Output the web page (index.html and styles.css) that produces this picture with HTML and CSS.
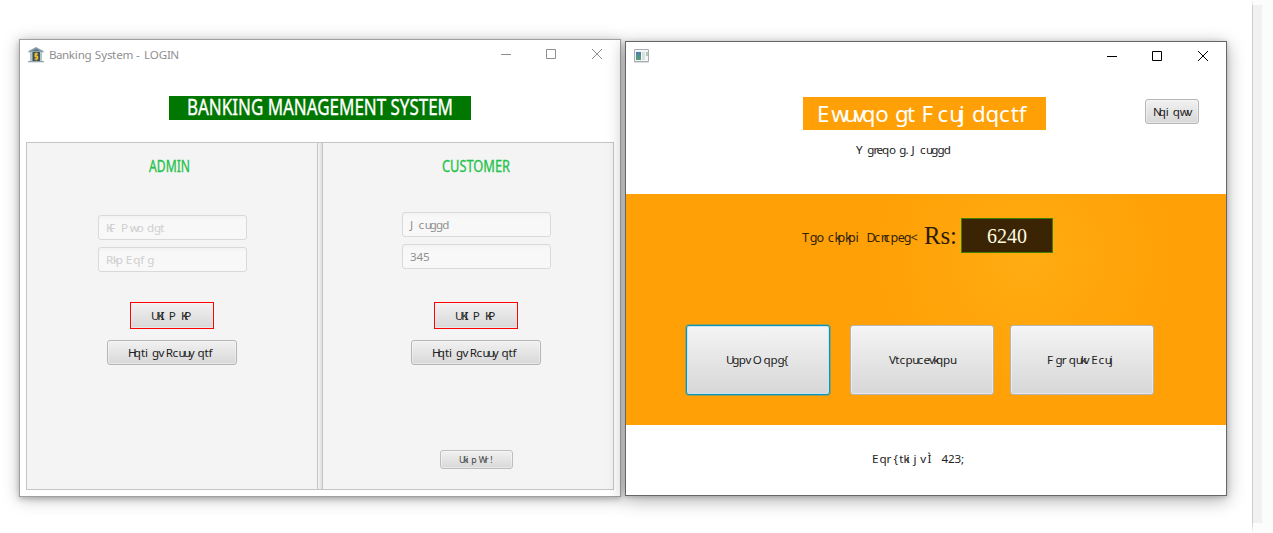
FILE: index.html
```html
<!DOCTYPE html>
<html lang="en">
<head>
<meta charset="utf-8">
<title>Banking System</title>
<link rel="stylesheet" href="styles.css">
</head>
<body>
<div class="page">
  <div class="stage">
    <section class="window login">
      <header class="titlebar">
        <svg class="app-icon" width="16" height="16" viewBox="0 0 16 16">
          <path d="M8 0 15.5 4v1.6H.5V4z" fill="#8ba0ab"/><path d="M4 4h8L8 1.8z" fill="#5d7480"/>
          <path d="M2 5.6h12v8.4H2z" fill="#b4c3ca"/><path d="M4.5 5h7.5v9H4.5z" fill="#3d4f58"/>
          <path d="M0 14h16v1.3H0z" fill="#93a5ae"/>
          <path d="M10 6.9H7.1v2.5h2.5v2.6H6.3M8.2 5.5v8" fill="none" stroke="#eec02c" stroke-width="1.2"/>
        </svg>
        <svg class="t title" data-metrics="Banking System - LOGIN"><text>Banking System - LOGIN</text></svg>
        <svg class="controls" width="104" height="12" viewBox="0 0 104 12"><path d="M0 5.5h10M45.5 .5h9v9h-9zM91 0l10 10M101 0L91 10"/></svg>
      </header>
      <div class="banner green"><svg width="266" height="24"><text x="0" y="19" textLength="266" lengthAdjust="spacingAndGlyphs">BANKING MANAGEMENT SYSTEM</text></svg></div>
      <div class="split">
        <div class="pane admin">
          <div class="head"><svg width="41" height="18"><text x="0" y="15" textLength="41" lengthAdjust="spacingAndGlyphs">ADMIN</text></svg></div>
          <div class="form">
            <div class="field hint"><svg class="t" data-metrics="ID Number"><text>KF P wo dgt</text></svg></div>
            <div class="field hint"><svg class="t" data-metrics="Pin Code"><text>Rkp Eqf g</text></svg></div>
            <div class="btn signin"><svg class="t" data-metrics="SIGN IN"><text>UKI P KP</text></svg></div>
            <div class="btn forgot"><svg class="t" data-metrics="Forget Password"><text>Hqti gv Rcuuy qtf</text></svg></div>
          </div>
        </div>
        <div class="divider"></div>
        <div class="pane customer">
          <div class="head"><svg width="68" height="18"><text x="0" y="15" textLength="68" lengthAdjust="spacingAndGlyphs">CUSTOMER</text></svg></div>
          <div class="form">
            <div class="field"><svg class="t" data-metrics="Haseeb"><text>J cuggd</text></svg></div>
            <div class="field"><svg class="t" data-metrics="123"><text>345</text></svg></div>
            <div class="btn signin"><svg class="t" data-metrics="SIGN IN"><text>UKI P KP</text></svg></div>
            <div class="btn forgot"><svg class="t" data-metrics="Forget Password"><text>Hqti gv Rcuuy qtf</text></svg></div>
            <div class="btn signup"><svg class="t" data-size="9" data-metrics="Sign Up!"><text>Uki p Wr !</text></svg></div>
          </div>
        </div>
      </div>
    </section>

    <section class="window dash">
      <header class="titlebar">
        <svg class="app-icon" width="16" height="14" viewBox="0 0 16 14">
          <path d="M.5.5h14v12H.5z" fill="#f3f5f6" stroke="#a7adb5"/><path d="M0 13.5h15" stroke="#ddd"/>
          <defs><linearGradient id="sky" x2="0" y2="1"><stop stop-color="#4a7cae"/><stop offset="1" stop-color="#55a573"/></linearGradient></defs>
          <path d="M2 3h5v8H2z" fill="url(#sky)"/><path d="M8 3h3v8H8z" fill="#dcdfe0"/><path d="M12 3h2v4h-2z" fill="#a5cfb8"/>
        </svg>
        <svg class="controls" width="104" height="12" viewBox="0 0 104 12"><path d="M0 5.5h10M45.5 .5h9v9h-9zM91 0l10 10M101 0L91 10"/></svg>
      </header>
      <div class="top">
        <div class="greeting">
          <div class="banner orange"><svg class="t" data-size="23" data-metrics="Customer Dashboard"><text>E wuvqo gt F cuj dqctf</text></svg></div>
          <svg class="t welcome" data-metrics="Welcome, Haseeb"><text>Y greqo g. J cuggd</text></svg>
        </div>
        <div class="btn logout"><svg class="t" data-metrics="Logout"><text>Nqi qwv</text></svg></div>
      </div>
      <div class="band">
        <div class="balance">
          <svg class="t" data-size="13" data-metrics="Remaining Balance:"><text>Tgo ckpkpi Dcncpeg&lt;</text></svg>
          <svg class="rs" width="33" height="30"><text x="0" y="23" textLength="33" lengthAdjust="spacingAndGlyphs">Rs:</text></svg>
          <div class="amount"><svg width="40" height="33"><text x="0" y="24" textLength="40" lengthAdjust="spacingAndGlyphs">6240</text></svg></div>
        </div>
        <div class="actions">
          <div class="btn big focused"><svg class="t" data-metrics="Sent Money"><text>Ugpv O qpg{</text></svg></div>
          <div class="btn big"><svg class="t" data-metrics="Transactions"><text>Vtcpucevkqpu</text></svg></div>
          <div class="btn big"><svg class="t" data-metrics="Deposit Cash"><text>F gr qukv E cuj</text></svg></div>
        </div>
      </div>
      <footer><svg class="t" data-metrics="Copyright © 2019"><text>Eqr {tki j v Ì 423;</text></svg></footer>
    </section>
  </div>
  <div class="edge"></div>
</div>
<script src="labels.js"></script>
</body>
</html>
```
FILE: styles.css
```css
* { box-sizing: border-box; }
body { margin: 0; background: #fff; font-family: "Noto Sans", "Open Sans", sans-serif; overflow: hidden; }
svg { display: block; flex: none; overflow: visible; }
text { white-space: pre; }
.page { display: flex; width: 1273px; height: 533px; }
.stage { display: flex; align-items: flex-start; gap: 4px; width: 1252px; padding: 39px 0 0 19px; }
.edge {
  width: 21px;
  background:
    linear-gradient(transparent, #ccc 8px, #ccc 522px, transparent) 0 0 / 1px 533px no-repeat,
    linear-gradient(#f1f1f1, #f1f1f1) 1px 5px / 9px 518px no-repeat #fcfcfc;
}

.window { display: flex; flex-direction: column; flex: none; width: 602px; background: #fff; }
.login { height: 458px; border: 1px solid #a0a0a0; box-shadow: 0 2px 15px rgba(0,0,0,.28), 0 2px 5px rgba(0,0,0,.2); }
.dash { height: 455px; margin-top: 2px; border: 1px solid #666; box-shadow: 0 4px 17px rgba(0,0,0,.33), 0 1px 5px rgba(0,0,0,.2); }
.titlebar { display: flex; align-items: flex-start; height: 30px; flex: none; padding: 7px 15px 0 8px; }
.titlebar .title { margin: 0 0 0 5px; fill: #8f8f8f; }
.controls { margin: 2px 0 0 auto; fill: none; stroke: #8f8f8f; }
.dash .controls { stroke: #000; }

.t { fill: #222; }
.banner { display: flex; justify-content: center; align-items: center; }
.green { width: 302px; height: 24px; margin: 26px 0 0 149px; background: #070; fill: #fff; stroke: #fff; stroke-width: .35px; font-size: 21px; }
.split { display: flex; height: 348px; margin: 22px 6px 0; border: 1px solid #c4c4c4; background: #f4f4f4; }
.pane { width: 290px; }
.divider { width: 6px; border: solid #c4c4c4; border-width: 0 1px; background: linear-gradient(90deg, #f4f4f4, #dedede); }
.head { display: flex; height: 20px; margin-top: 14px; fill: #1fc24a; stroke: #1fc24a; stroke-width: .3px; font-size: 15.5px; }
.admin .head { padding-left: 122px; }
.customer .head { padding-left: 119px; }
.form { display: flex; flex-direction: column; align-items: center; width: 148px; }
.admin .form { margin: 38px 0 0 71px; }
.customer .form { margin: 35px 0 0 79px; }
.field { display: flex; align-items: center; align-self: flex-start; flex: none; width: 149px; height: 25px; margin-bottom: 7px; padding-left: 7px; background: linear-gradient(#f3f3f3, #f8f8f8 5px); border: 1px solid #d9d9d9; border-radius: 3px; }
.field .t { fill: #919191; }
.hint .t { fill: #cfcfcf; }

.btn { display: flex; align-items: center; justify-content: center; flex: none; border: 1px solid #b5b5b5; border-radius: 3px; background: linear-gradient(#f1f1f1, #d8d8d8); box-shadow: inset 0 0 0 1px rgba(255,255,255,.4); }
.signin { width: 84px; height: 27px; margin-top: 23px; border-color: #f00; border-radius: 0; }
.customer .signin { margin-top: 26px; }
.forgot { width: 130px; height: 25px; margin-top: 11px; }
.signup { width: 73px; height: 19px; margin-top: 85px; border-color: #bebebe; }
.signup .t { fill: #444; }

.top { display: flex; height: 122px; flex: none; padding-left: 177px; }
.greeting { width: 243px; padding-top: 25px; }
.orange { height: 33px; background: #ffa006; }
.orange .t { fill: #fff; }
.welcome { margin: 12px 0 0 53px; }
.logout { width: 54px; height: 25px; margin: 27px 0 0 99px; }
.band { display: flex; flex-direction: column; height: 231px; flex: none; background: radial-gradient(circle at 400px 62px, #ffac12, #ffa006 150px); }
.balance { display: flex; align-items: center; height: 35px; margin: 24px 0 0 176px; }
.rs { margin: 0 4px 0 11px; font: 25px "Liberation Serif", serif; fill: #2a1b05; }
.balance .t { margin-top: 3px; fill: #332407; }
.amount { display: flex; justify-content: center; width: 92px; height: 35px; border: 1px solid #3e8000; background: #3b2403; fill: #fffbe0; font: 21px "Liberation Serif", serif; }
.actions { display: flex; margin: 72px 0 0 60px; }
.big { width: 144px; height: 70px; margin-right: 16px; background: linear-gradient(#f4f4f4, #d7d7d7); }
.focused { margin-right: 20px; border-color: #0a93b9; box-shadow: 0 0 0 1px rgba(3,158,211,.4), inset 0 0 0 1px #c9e4ee; }
footer { display: flex; padding: 26px 0 0 246px; }
```
FILE: labels.js
```js
// Advance widths of the interface face, in 1/2048 em
const ADV = {
  a:1042,b:1204,c:946,d:1206,e:1071,f:641,g:1206,h:1158,i:496,j:496,k:1018,l:496,m:1764,
  n:1159,o:1200,p:1204,q:1206,r:711,s:869,t:694,u:1159,v:981,w:1479,x:940,y:991,z:926,
  A:1321,B:1174,C:1268,D:1436,E:1036,F:999,G:1407,H:1454,I:545,J:731,K:1189,L:964,M:1839,
  N:1532,O:1544,P:1147,Q:1544,R:1225,S:1087,T:1073,U:1407,V:1272,W:1913,X:1206,Y:1132,Z:1168,
  ' ':561, ',':444, ':':444, '-':819, '!':582, '©':1821
};

// Each glyph sits at the pen position given by the label's metric string
document.querySelectorAll('svg.t').forEach(svg => {
  const size = +(svg.dataset.size || 12);
  const src = svg.dataset.metrics;
  const node = svg.querySelector('text');
  const xs = [];
  let pen = 0, i = 0;
  for (const ch of node.textContent) {
    xs.push(pen.toFixed(2));
    if (ch === ' ' && src[i] !== ' ') continue;
    pen += (ADV[src[i]] || 1104) / 2048 * size;
    i++;
  }
  while (i < src.length) pen += (ADV[src[i++]] || 1104) / 2048 * size;
  svg.setAttribute('width', pen.toFixed(2));
  svg.setAttribute('height', Math.round(size * 1.33));
  node.setAttribute('x', xs.join(' '));
  node.setAttribute('y', size > 20 ? 24 : Math.round(size * 0.98));
  node.setAttribute('font-size', size * 0.97);
});
```
